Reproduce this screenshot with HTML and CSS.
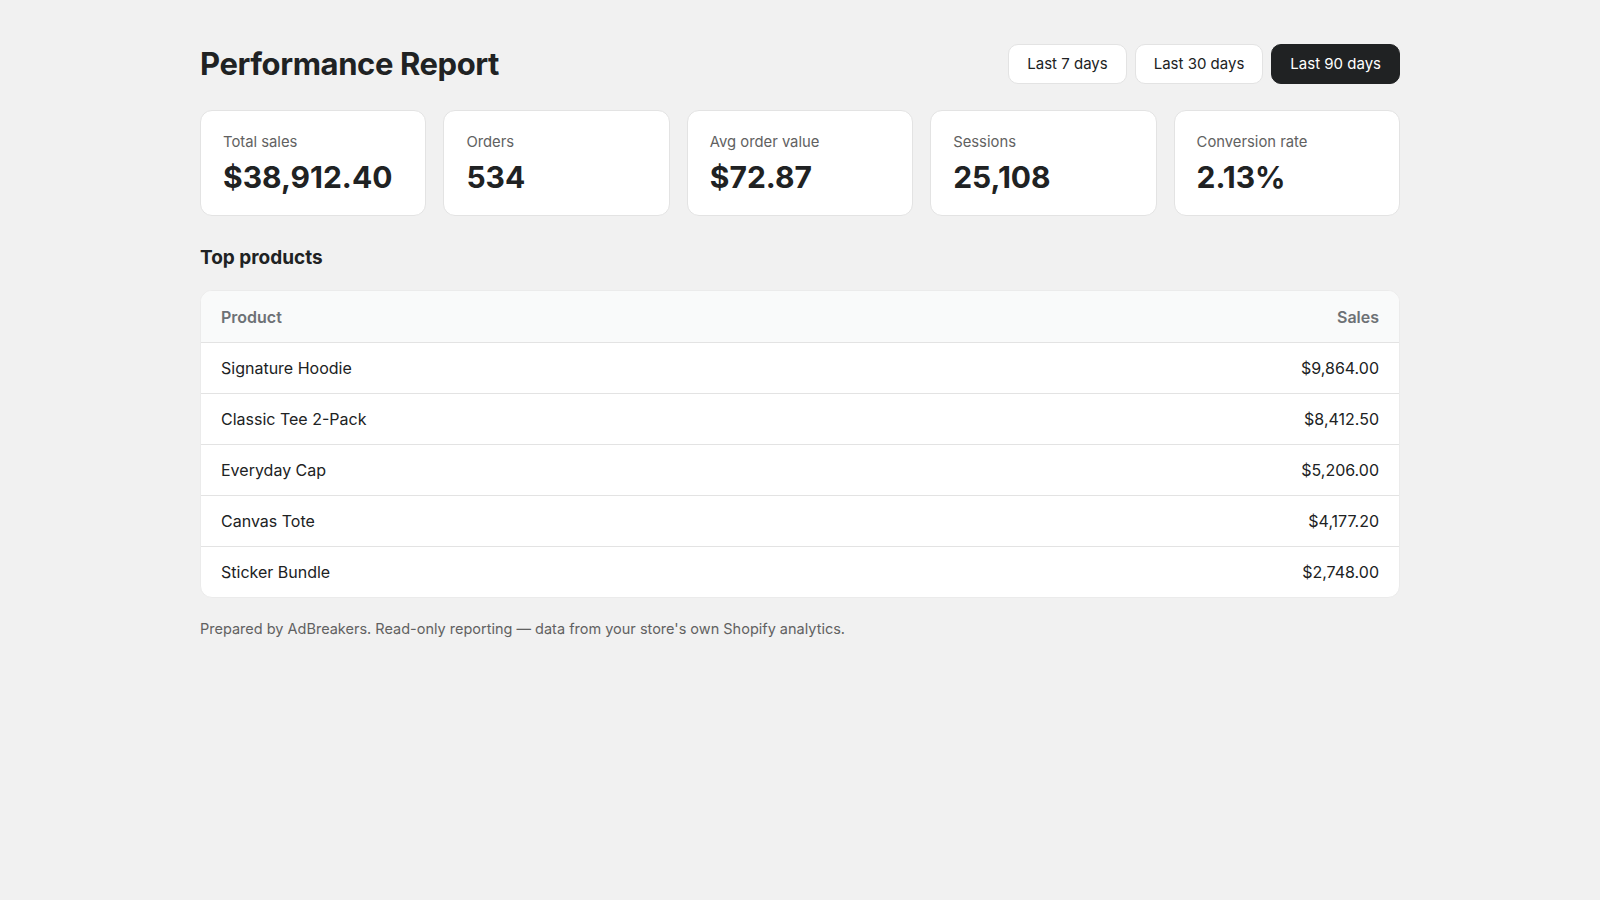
FILE: index.html
```html
<!DOCTYPE html>
<html lang="en">
<head>
<meta charset="utf-8">
<title>Performance Report</title>
<link rel="stylesheet" href="styles.css">
</head>
<body>
<main class="page">
  <header class="top">
    <h1 class="title">Performance Report</h1>
    <div class="ranges">
      <button class="range">Last 7 days</button>
      <button class="range">Last 30 days</button>
      <button class="range active">Last 90 days</button>
    </div>
  </header>

  <section class="stats">
    <div class="stat"><div class="label">Total sales</div><div class="value">$38,912.40</div></div>
    <div class="stat"><div class="label">Orders</div><div class="value">534</div></div>
    <div class="stat"><div class="label">Avg order value</div><div class="value">$72.87</div></div>
    <div class="stat"><div class="label">Sessions</div><div class="value">25,108</div></div>
    <div class="stat"><div class="label">Conversion rate</div><div class="value">2.13%</div></div>
  </section>

  <h2 class="section-title">Top products</h2>

  <table class="products">
    <thead>
      <tr><th>Product</th><th class="num">Sales</th></tr>
    </thead>
    <tbody>
      <tr><td>Signature Hoodie</td><td class="num">$9,864.00</td></tr>
      <tr><td>Classic Tee 2-Pack</td><td class="num">$8,412.50</td></tr>
      <tr><td>Everyday Cap</td><td class="num">$5,206.00</td></tr>
      <tr><td>Canvas Tote</td><td class="num">$4,177.20</td></tr>
      <tr><td>Sticker Bundle</td><td class="num">$2,748.00</td></tr>
    </tbody>
  </table>

  <p class="foot">Prepared by AdBreakers. Read-only reporting — data from your store's own Shopify analytics.</p>
</main>
</body>
</html>
```

FILE: styles.css
```css
* { box-sizing: border-box; }

html, body {
  margin: 0;
  background: #f1f1f1;
  color: #202223;
  font-family: Inter, "Noto Sans", "Liberation Sans", sans-serif;
}

.page {
  max-width: 1200px;
  margin: 0 auto;
  padding-top: 44px;
}

.top {
  display: flex;
  align-items: flex-start;
  justify-content: space-between;
  margin-bottom: 26px;
}

.title {
  margin: 0;
  font-size: 31px;
  font-weight: 700;
  letter-spacing: -0.4px;
  line-height: 40px;
  color: #202223;
}

.ranges {
  display: flex;
  gap: 8px;
}

.range {
  font-family: inherit;
  font-size: 15px;
  line-height: 20px;
  padding: 9px 18px;
  border: 1px solid #e3e3e3;
  border-radius: 10px;
  background: #ffffff;
  color: #202223;
  cursor: pointer;
}

.range.active {
  background: #202223;
  border-color: #202223;
  color: #ffffff;
}

.stats {
  display: grid;
  grid-template-columns: repeat(5, 1fr);
  gap: 17px;
}

.stat {
  background: #ffffff;
  border: 1px solid #e3e3e3;
  border-radius: 12px;
  padding: 21px 22px 20px;
}

.label {
  font-size: 14.8px;
  line-height: 20px;
  color: #616161;
}

.value {
  margin-top: 7px;
  font-size: 30px;
  font-weight: 700;
  line-height: 36px;
  color: #202223;
}

.section-title {
  margin: 28px 0 18px;
  font-size: 19px;
  font-weight: 700;
  line-height: 28px;
  color: #202223;
}

.products {
  width: 100%;
  border-collapse: separate;
  border-spacing: 0;
  background: #ffffff;
  border: 1px solid #ebebeb;
  border-radius: 12px;
  overflow: hidden;
  font-size: 16px;
}

.products th,
.products td {
  height: 51px;
  padding: 0 20px;
  text-align: left;
  border-top: 1px solid #e3e3e3;
}

.products th {
  border-top: none;
  background: #f9fafa;
  color: #6d7175;
  font-weight: 600;
}

.products td {
  color: #202223;
}

.products .num {
  text-align: right;
}

.foot {
  margin: 21px 0 0;
  font-size: 14.5px;
  line-height: 20px;
  color: #616161;
}
```
